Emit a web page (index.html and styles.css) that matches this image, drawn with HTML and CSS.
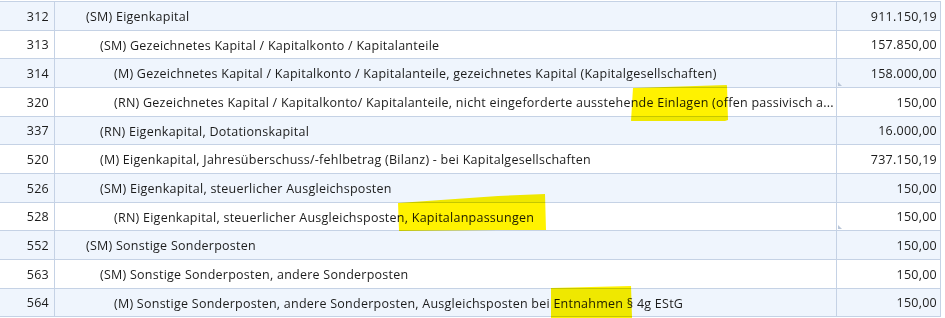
FILE: index.html
```html
<!DOCTYPE html>
<html lang="de">
<head>
<meta charset="utf-8">
<link rel="stylesheet" href="styles.css">
</head>
<body>
<div class="sheet">
  <div class="grid">
    <div class="row alt"><div class="num">312</div><div class="desc l0">(SM) Eigenkapital</div><div class="amt">911.150,19</div></div>
    <div class="row"><div class="num">313</div><div class="desc l1">(SM) Gezeichnetes Kapital / Kapitalkonto / Kapitalanteile</div><div class="amt">157.850,00</div></div>
    <div class="row alt"><div class="num">314</div><div class="desc l2">(M) Gezeichnetes Kapital / Kapitalkonto / Kapitalanteile, gezeichnetes Kapital (Kapitalgesellschaften)</div><div class="amt mark">158.000,00</div></div>
    <div class="row"><div class="num">320</div><div class="desc l2">(RN) Gezeichnetes Kapital / Kapitalkonto/ Kapitalanteile, nicht eingeforderte ausstehende Einlagen (offen passivisch a...</div><div class="amt">150,00</div></div>
    <div class="row alt"><div class="num">337</div><div class="desc l1">(RN) Eigenkapital, Dotationskapital</div><div class="amt">16.000,00</div></div>
    <div class="row"><div class="num">520</div><div class="desc l1">(M) Eigenkapital, Jahresüberschuss/-fehlbetrag (Bilanz) - bei Kapitalgesellschaften</div><div class="amt">737.150,19</div></div>
    <div class="row alt"><div class="num">526</div><div class="desc l1">(SM) Eigenkapital, steuerlicher Ausgleichsposten</div><div class="amt">150,00</div></div>
    <div class="row"><div class="num">528</div><div class="desc l2">(RN) Eigenkapital, steuerlicher Ausgleichsposten, Kapitalanpassungen</div><div class="amt mark">150,00</div></div>
    <div class="row alt"><div class="num">552</div><div class="desc l0">(SM) Sonstige Sonderposten</div><div class="amt">150,00</div></div>
    <div class="row"><div class="num">563</div><div class="desc l1">(SM) Sonstige Sonderposten, andere Sonderposten</div><div class="amt">150,00</div></div>
    <div class="row alt"><div class="num">564</div><div class="desc l2">(M) Sonstige Sonderposten, andere Sonderposten, Ausgleichsposten bei Entnahmen § 4g EStG</div><div class="amt">150,00</div></div>
  </div>
  <div class="marker m1"></div>
  <div class="marker m2"></div>
  <div class="marker m3"></div>
</div>
</body>
</html>
```

FILE: styles.css
```css
html, body {
  margin: 0;
  padding: 0;
  background: #ffffff;
  overflow: hidden;
}

.sheet {
  position: relative;
  width: 945px;
  height: 318px;
  overflow: hidden;
  padding-top: 1px;
  box-sizing: border-box;
  font-family: "Open Sans", "Noto Sans", sans-serif;
  font-size: 12.5px;
  letter-spacing: 0.25px;
  color: #1c1c1c;
}

.grid {
  width: 941px;
  border-top: 1px solid #c5d2e5;
}

.row {
  display: grid;
  grid-template-columns: 55px 782px 104px;
  height: 28.67px;
  box-sizing: border-box;
  border-bottom: 1px solid #c5d2e5;
  background: #ffffff;
}

.row.alt {
  background: #eff5fd;
}

.row > div {
  display: flex;
  align-items: center;
  white-space: nowrap;
  overflow: hidden;
  border-right: 1px solid #c5d2e5;
  box-sizing: border-box;
  padding-top: 1px;
}

.num {
  justify-content: flex-end;
  padding-right: 5px;
}

.desc {
  display: block !important;
  line-height: 27px;
  padding-right: 2px;
}

.desc.l0 { padding-left: 31px; }
.desc.l1 { padding-left: 45px; }
.desc.l2 { padding-left: 59px; }

.amt {
  justify-content: flex-end;
  padding-right: 3px;
  position: relative;
}

.amt.mark::after {
  content: "";
  position: absolute;
  left: 1px;
  bottom: 1px;
  width: 0;
  height: 0;
  border-left: 4px solid #b9c6d8;
  border-top: 4px solid transparent;
}

.marker {
  position: absolute;
  background: #fff200;
  mix-blend-mode: multiply;
}

.m1 {
  left: 631px;
  top: 85px;
  width: 97px;
  height: 37px;
  clip-path: polygon(2px 3px, 96px 0, 97px 35px, 94px 36px, 0 36px);
  border-radius: 2px;
}

.m2 {
  left: 398px;
  top: 194px;
  width: 148px;
  height: 38px;
  clip-path: polygon(0 9px, 100px 2px, 147px 0, 148px 36px, 100px 36px, 1px 37px);
}

.m3 {
  left: 551px;
  top: 286px;
  width: 81px;
  height: 32px;
  clip-path: polygon(0 2px, 80px 0, 81px 32px, 0 32px);
}
```
